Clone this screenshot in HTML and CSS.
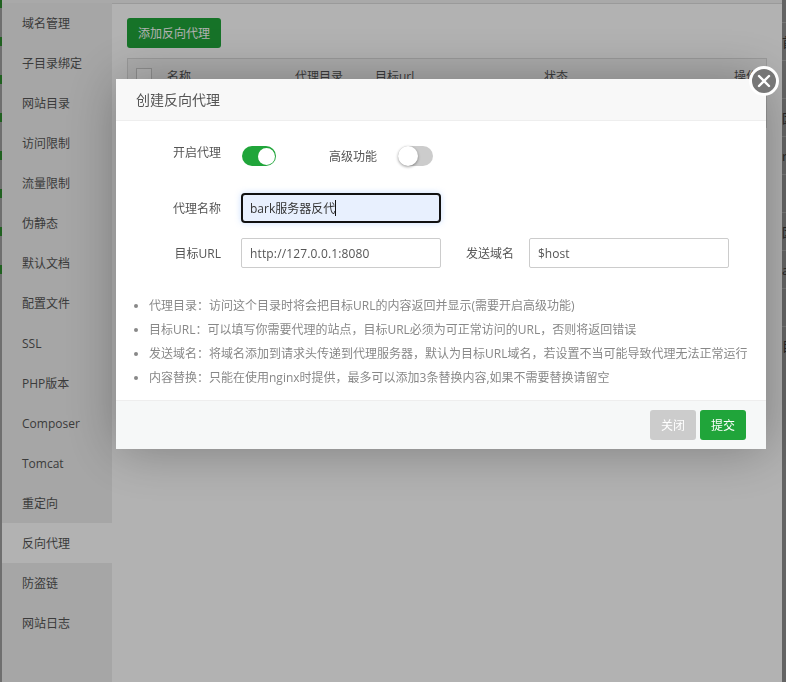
FILE: index.html
```html
<!DOCTYPE html>
<html lang="zh-CN">
<head>
  <meta charset="UTF-8" />
  <title>创建反向代理</title>
  <link rel="stylesheet" href="styles.css">
</head>
<body>
  <div class="page">
    <div class="edge-left"><div class="edge-marks"></div></div>

    <div class="site-window">
      <div class="sidebar">
        <div class="side-item">域名管理</div>
        <div class="side-item">子目录绑定</div>
        <div class="side-item">网站目录</div>
        <div class="side-item">访问限制</div>
        <div class="side-item">流量限制</div>
        <div class="side-item">伪静态</div>
        <div class="side-item">默认文档</div>
        <div class="side-item">配置文件</div>
        <div class="side-item">SSL</div>
        <div class="side-item">PHP版本</div>
        <div class="side-item">Composer</div>
        <div class="side-item">Tomcat</div>
        <div class="side-item">重定向</div>
        <div class="side-item active">反向代理</div>
        <div class="side-item">防盗链</div>
        <div class="side-item">网站日志</div>
      </div>

      <div class="main">
        <button class="add-btn">添加反向代理</button>
        <div class="proxy-table">
          <div class="table-head">
            <span class="check"></span>
            <span class="col-name">名称</span>
            <span class="col-dir">代理目录</span>
            <span class="col-url">目标url</span>
            <span class="col-state">状态</span>
            <span class="col-op">操作</span>
          </div>
        </div>
      </div>
    </div>

    <div class="edge-right">
      <div class="edge-row">首</div>
      <div class="edge-row">&nbsp;</div>
      <div class="edge-row">因</div>
      <div class="edge-row">r</div>
      <div class="edge-row">&nbsp;</div>
      <div class="edge-row">因</div>
      <div class="edge-row">a</div>
      <div class="edge-row">&nbsp;</div>
      <div class="edge-row">目</div>
    </div>
  </div>

  <div class="mask"></div>

  <div class="modal">
    <div class="modal-title">创建反向代理</div>
    <span class="modal-close">
      <svg width="14" height="14" viewBox="0 0 14 14">
        <path d="M2 2 L12 12 M12 2 L2 12" stroke="#fff" stroke-width="2.4" stroke-linecap="round" />
      </svg>
    </span>

    <div class="modal-body">
      <div class="form-row switches">
        <span class="label label-high">开启代理</span>
        <span class="switch on"><i></i></span>
        <span class="label label-second">高级功能</span>
        <span class="switch"><i></i></span>
      </div>
      <div class="form-row name-row">
        <span class="label">代理名称</span>
        <div class="input-wrap">
          <input class="text-input focused" type="text" value="bark服务器反代" />
          <span class="caret"></span>
        </div>
      </div>
      <div class="form-row">
        <span class="label">目标URL</span>
        <input class="text-input url-input" type="text" value="http://127.0.0.1:8080" />
        <span class="label label-domain">发送域名</span>
        <input class="text-input" type="text" value="$host" />
      </div>

      <ul class="tips">
        <li>代理目录：访问这个目录时将会把目标URL的内容返回并显示(需要开启高级功能)</li>
        <li>目标URL：可以填写你需要代理的站点，目标URL必须为可正常访问的URL，否则将返回错误</li>
        <li>发送域名：将域名添加到请求头传递到代理服务器，默认为目标URL域名，若设置不当可能导致代理无法正常运行</li>
        <li>内容替换：只能在使用nginx时提供，最多可以添加3条替换内容,如果不需要替换请留空</li>
      </ul>
    </div>

    <div class="modal-foot">
      <button class="btn btn-close">关闭</button>
      <button class="btn btn-submit">提交</button>
    </div>
  </div>
</body>
</html>
```

FILE: styles.css
```css
* { box-sizing: border-box; }

html, body {
  height: 100%;
  margin: 0;
  overflow: hidden;
}

body {
  font-family: "Open Sans", "Noto Sans CJK SC", sans-serif;
  font-size: 12px;
  color: #555;
  background: #fff;
}

.page {
  display: flex;
  height: 100%;
}

.edge-left {
  width: 2px;
  background: #a0a0a0;
}

.edge-marks {
  height: 280px;
  background: linear-gradient(to bottom, #2e8b2e 0, #2e8b2e 9px, #a0a0a0 9px, #a0a0a0 38px) 0 37px / 100% 38px repeat-y;
}

.edge-right {
  width: 4px;
  overflow: hidden;
  background: #909090;
  padding-top: 22px;
  color: #333;
}

.edge-row {
  height: 38px;
  line-height: 38px;
  border-top: 1px solid #aaa;
  white-space: nowrap;
  font-size: 13px;
}

.site-window {
  flex: 1;
  display: flex;
  margin-top: 3px;
  border-top: 1px solid #ddd;
  box-shadow: 0 -3px 0 #f3f3f3;
  background: #fff;
}

.sidebar {
  width: 110px;
  background: #eee;
  margin-top: -1px;
}

.side-item {
  height: 40px;
  line-height: 41px;
  padding-left: 20px;
  font-size: 12px;
  color: #555;
}

.side-item.active {
  background: #fff;
}

.main {
  flex: 1;
  padding: 14px 15px 0;
}

.add-btn {
  display: block;
  width: 94px;
  height: 30px;
  padding: 0;
  border: none;
  border-radius: 3px;
  background: #20a53a;
  color: #fff;
  font-family: inherit;
  font-size: 12px;
}

.proxy-table {
  margin-top: 10px;
  height: 70px;
  border: 1px solid #ddd;
  background: #f6f6f6;
}

.table-head {
  display: flex;
  align-items: center;
  height: 33px;
  color: #555;
}

.check {
  width: 16px;
  height: 16px;
  margin-left: 8px;
  border: 1px solid #ccc;
  background: #fff;
}

.col-name { margin-left: 15px; width: 128px; }
.col-dir { width: 80px; }
.col-url { width: 169px; }
.col-state { width: 190px; }
.col-op { white-space: nowrap; }

.mask {
  position: fixed;
  inset: 0;
  background: rgba(0, 0, 0, 0.3);
}

.modal {
  position: fixed;
  left: 116px;
  top: 79px;
  width: 650px;
  height: 370px;
  display: flex;
  flex-direction: column;
  background: #fff;
  box-shadow: 1px 1px 50px rgba(0, 0, 0, 0.3);
}

.modal-title {
  height: 42px;
  line-height: 41px;
  padding-left: 20px;
  font-size: 14px;
  color: #555;
  background: #f8f8f8;
  border-bottom: 1px solid #eee;
}

.modal-close {
  position: absolute;
  right: -13px;
  top: -13px;
  width: 30px;
  height: 30px;
  display: flex;
  align-items: center;
  justify-content: center;
  border: 3px solid #fff;
  border-radius: 50%;
  background: #777;
}

.modal-body {
  flex: 1;
  padding-top: 25px;
}

.form-row {
  display: flex;
  align-items: center;
  height: 30px;
  margin-bottom: 15px;
}

.switches {
  height: 20px;
  margin-bottom: 27px;
}

.label {
  width: 105px;
  margin-right: 20px;
  text-align: right;
  color: #555;
}

.switches .label {
  margin-right: 21px;
}

.label-high {
  margin-bottom: 8px;
}

.switches .label-second {
  width: 101px;
}

.label-domain {
  width: 73px;
  margin-right: 15px;
}

.switch {
  position: relative;
  width: 35px;
  height: 20px;
  border-radius: 10px;
  background: #ccc;
}

.switch i {
  position: absolute;
  left: 0;
  top: 0;
  width: 20px;
  height: 20px;
  border-radius: 50%;
  background: #fff;
  box-shadow: 0 1px 3px rgba(0, 0, 0, 0.4);
}

.switch.on {
  width: 34px;
  background: #20a53a;
}

.switch.on i {
  left: 16px;
  width: 17px;
  height: 17px;
  top: 1.5px;
  box-shadow: none;
}

.input-wrap {
  position: relative;
}

.text-input {
  display: block;
  width: 200px;
  height: 30px;
  padding: 0 8px;
  border: 1px solid #ccc;
  border-radius: 2px;
  font-family: inherit;
  font-size: 12px;
  color: #555;
  background: #fff;
}

.url-input {
  letter-spacing: 0.15px;
}

.text-input.focused {
  background: #e8f0fe;
  border: 2px solid #111;
  border-radius: 4px;
  padding: 0 7px;
  color: #333;
  box-shadow: 0 0 6px rgba(100, 160, 255, 0.35);
}

.caret {
  position: absolute;
  left: 94px;
  top: 7px;
  width: 1px;
  height: 16px;
  background: #111;
}

.tips {
  margin: 26px 0 0;
  padding: 0 0 0 33px;
  color: #888;
}

.tips li {
  height: 24px;
  line-height: 24px;
  white-space: nowrap;
}

.modal-foot {
  height: 49px;
  display: flex;
  justify-content: flex-end;
  align-items: flex-start;
  gap: 4px;
  padding: 9px 20px 0 0;
  background: #f6f8f8;
  border-top: 1px solid #eee;
}

.btn {
  width: 46px;
  height: 30px;
  padding: 0;
  border: none;
  border-radius: 3px;
  color: #fff;
  font-family: inherit;
  font-size: 12px;
}

.btn-close { background: #ccc; }
.btn-submit { background: #20a53a; }
```
